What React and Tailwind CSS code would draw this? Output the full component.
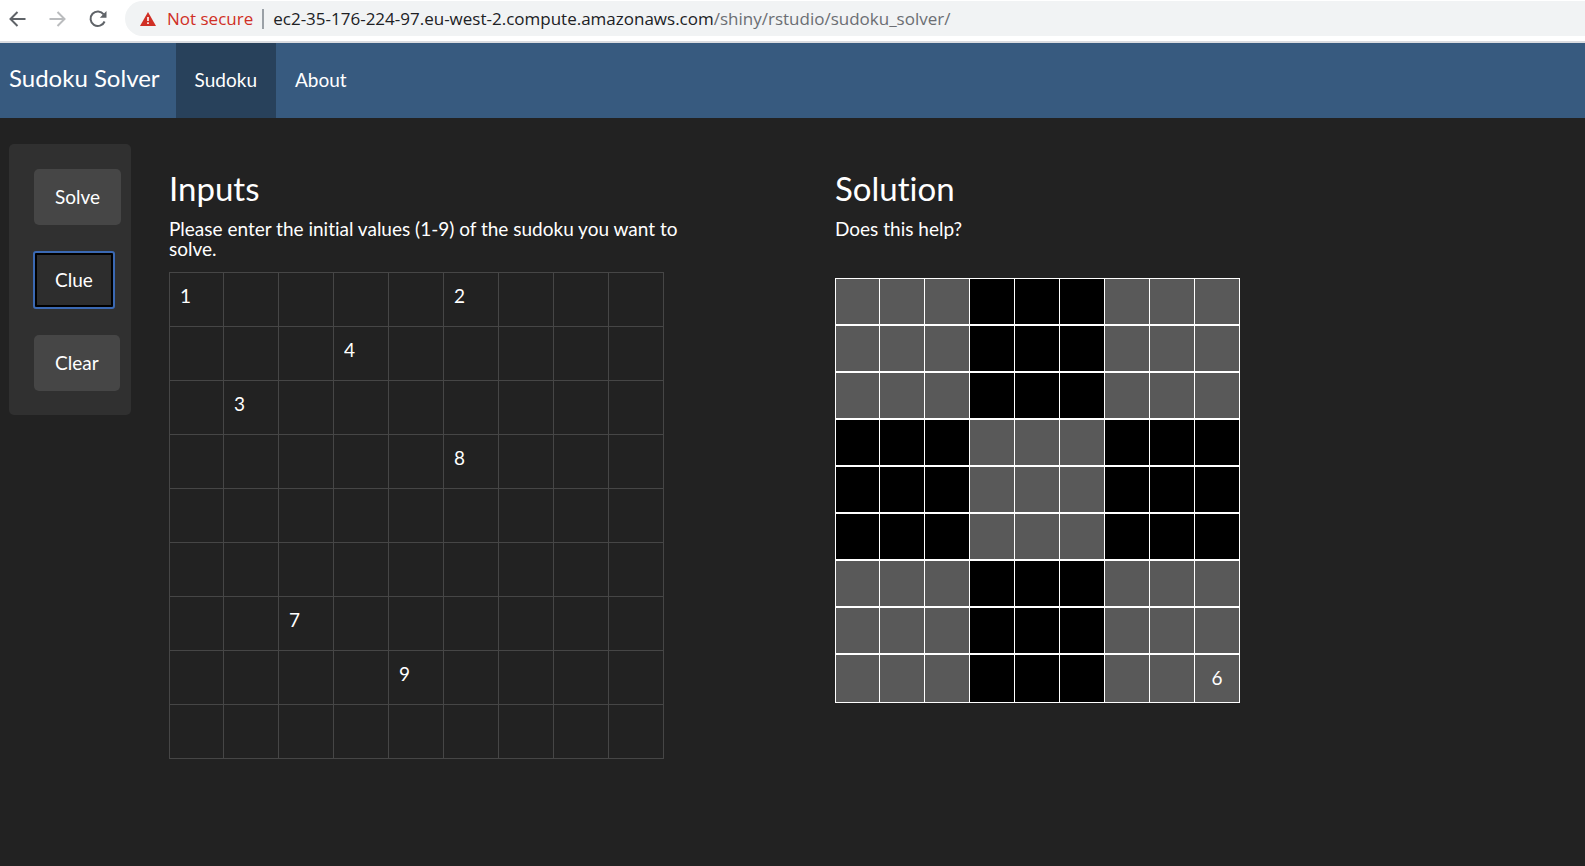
const INPUTS = [
  ["1", "", "", "", "", "2", "", "", ""],
  ["", "", "", "4", "", "", "", "", ""],
  ["", "3", "", "", "", "", "", "", ""],
  ["", "", "", "", "", "8", "", "", ""],
  ["", "", "", "", "", "", "", "", ""],
  ["", "", "", "", "", "", "", "", ""],
  ["", "", "7", "", "", "", "", "", ""],
  ["", "", "", "", "9", "", "", "", ""],
  ["", "", "", "", "", "", "", "", ""],
];

const SIZE = [0, 1, 2, 3, 4, 5, 6, 7, 8];
const CLUE = { row: 8, col: 8, value: "6" };

const isDark = (row, col) =>
  (Math.floor(row / 3) + Math.floor(col / 3)) % 2 === 1;

function BrowserBar() {
  return (
    <div className="flex h-[43px] items-start border-b-2 border-[#dadce0] bg-white pt-px font-['Open_Sans',sans-serif]">
      <div className="flex h-[35px] shrink-0 items-center pl-[9px]">
        <button type="button" aria-label="Back" className="mr-[23px] text-[#5f6368]">
          <svg viewBox="0 0 17 16" className="block h-4 w-[17px]" fill="none" stroke="currentColor" strokeWidth="2">
            <path d="M16.5 8H2M8.5 1L1.5 8l7 7" />
          </svg>
        </button>
        <button type="button" aria-label="Forward" className="mr-[23px] text-[#babcbe]">
          <svg viewBox="0 0 17 16" className="block h-4 w-[17px]" fill="none" stroke="currentColor" strokeWidth="2">
            <path d="M0.500 8H15M8.500 1l7 7-7 7" />
          </svg>
        </button>
        <button type="button" aria-label="Reload" className="mr-[18px] text-[#5f6368]">
          <svg viewBox="0 0 18 18" className="block size-[18px]" fill="none" stroke="currentColor" strokeWidth="2">
            <path d="M14.700 4.300A7.300 7.300 0 1 0 15.600 11.500" />
            <path d="M17.500 1V7.700H10.800z" fill="currentColor" stroke="none" />
          </svg>
        </button>
      </div>
      <div className="flex h-[35px] min-w-0 flex-1 items-center rounded-l-full bg-[#f1f3f4] pl-[15px] text-[17px] whitespace-nowrap">
        <svg viewBox="0 0 16 14" className="mr-[11px] block h-3.5 w-4 shrink-0" aria-hidden="true">
          <path d="M8 0l8 14H0z" fill="#d02f25" />
          <path d="M7.200 5h1.600v4H7.200zM7.200 10.300h1.600v1.600H7.200z" fill="#fff" />
        </svg>
        <span className="text-[#d02f25]">Not secure</span>
        <span className="mx-[9px] h-5 w-0.5 shrink-0 bg-[#9aa0a6]" />
        <span className="text-[#202124]">
          ec2-35-176-224-97.eu-west-2.compute.amazonaws.com
          <span className="text-[#6b6e73]">/shiny/rstudio/sudoku_solver/</span>
        </span>
      </div>
    </div>
  );
}

function NavBar() {
  return (
    <nav className="flex h-[75px] items-stretch bg-[#375a7f]">
      <a href="#home" className="flex items-center pr-4 pb-[5px] pl-[9px] text-[24px]">
        Sudoku Solver
      </a>
      <a href="#sudoku" aria-current="page" className="flex items-center bg-[#28415b] px-[19px]">
        Sudoku
      </a>
      <a href="#about" className="flex items-center px-[19px]">
        About
      </a>
    </nav>
  );
}

function Controls() {
  const base = "h-14 px-[21px]";
  return (
    <div className="flex w-[122px] shrink-0 flex-col items-start gap-[27px] self-start rounded-[5px] bg-[#303030] px-[25px] pt-[25px] pb-6">
      <button type="button" className={`${base} rounded-[5px] bg-[#464646]`}>
        Solve
      </button>
      <button
        type="button"
        className={`${base} rounded-[2px] bg-[#2d2d2d] inset-ring-3 inset-ring-black outline-2 -outline-offset-1 outline-[#3b69b3]`}
      >
        Clue
      </button>
      <button type="button" className={`${base} rounded-[5px] bg-[#464646]`}>
        Clear
      </button>
    </div>
  );
}

function InputGrid() {
  return (
    <table className="w-full table-fixed border-separate border-spacing-0 border-t border-l border-[#464646]">
      <tbody>
        {INPUTS.map((row, r) => (
          <tr key={r}>
            {row.map((value, c) => (
              <td
                key={c}
                className="h-[54px] border-r border-b border-[#464646] p-0 align-top first:w-[54px]"
              >
                <input
                  aria-label={`Row ${r + 1}, column ${c + 1}`}
                  defaultValue={value}
                  maxLength={1}
                  className="block h-11 w-full bg-transparent px-2.5 outline-none"
                />
              </td>
            ))}
          </tr>
        ))}
      </tbody>
    </table>
  );
}

function SolutionGrid() {
  return (
    <table className="w-[405px] table-fixed border-separate border-spacing-0 border-t border-l border-white">
      <tbody>
        {SIZE.map((r) => (
          <tr key={r} className="group">
            {SIZE.map((c) => (
              <td
                key={c}
                className={`h-[47px] border-r border-b-2 border-white p-0 pb-0.5 text-center group-last:h-12 group-last:border-b first:w-11 ${isDark(r, c) ? "bg-black" : "bg-[#595959]"}`}
              >
                {r === CLUE.row && c === CLUE.col ? CLUE.value : ""}
              </td>
            ))}
          </tr>
        ))}
      </tbody>
    </table>
  );
}

export default function App() {
  return (
    <div className="flex min-h-screen flex-col bg-[#222222] font-[Lato,sans-serif] text-[19px] text-white [font-variant-ligatures:none]">
      <BrowserBar />
      <NavBar />
      <main className="flex gap-[38px] pt-[26px] pl-[9px]">
        <Controls />
        <div className="grid min-w-0 flex-1 grid-cols-[495fr_750fr] gap-[171px] pt-[26px] leading-[20px]">
          <section>
            <h1 className="text-[33px] leading-[36px]">Inputs</h1>
            <p className="-mr-6 mt-[13px] mb-[13px]">
              Please enter the initial values (1-9) of the sudoku you want to solve.
            </p>
            <InputGrid />
          </section>
          <section>
            <h1 className="text-[33px] leading-[36px]">Solution</h1>
            <p className="mt-[13px] mb-[39px]">Does this help?</p>
            <SolutionGrid />
          </section>
        </div>
      </main>
    </div>
  );
}
